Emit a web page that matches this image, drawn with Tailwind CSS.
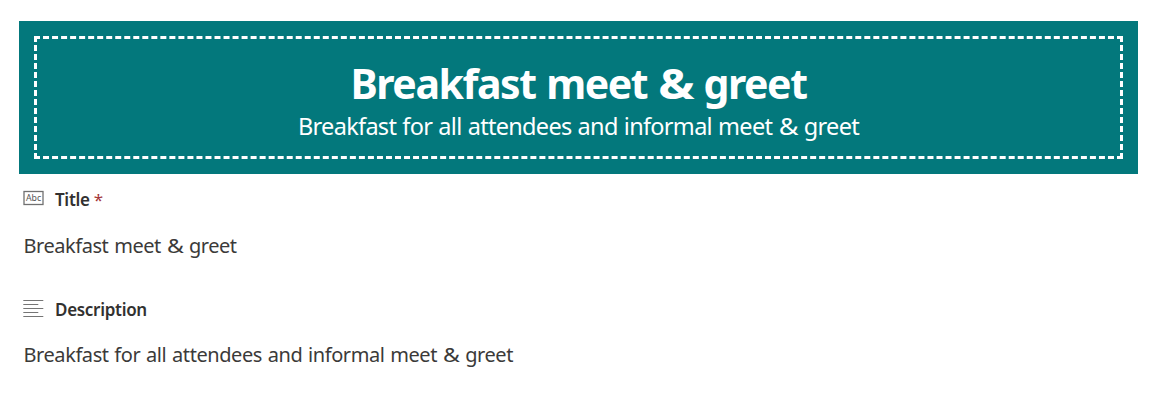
<!DOCTYPE html>
<html lang="en">
<head>
<meta charset="utf-8">
<title>Breakfast meet &amp; greet</title>
<script src="https://cdn.jsdelivr.net/npm/@tailwindcss/browser@4"></script>
</head>
<body class="bg-white font-['Noto_Sans','Open_Sans',sans-serif] text-[#3b3a39]">
<main class="h-[417px] overflow-hidden pl-[19px] pr-[22px] pt-[21px] whitespace-nowrap">
  <header class="h-[153px] bg-[#03787c] p-[15px] text-white">
    <div class="h-[123px] border-[3px] border-dashed border-white pt-[21px] text-center">
      <h1 class="h-[46px] text-[41px] leading-[46px] font-bold tracking-[-1.45px] [word-spacing:1.5px]">Breakfast meet <span class="mx-[0.07em] inline-block scale-x-[1.18]">&amp;</span> greet</h1>
      <p class="h-[40px] text-[23.5px] leading-[40px] tracking-[-0.7px] [word-spacing:0.7px]">Breakfast for all attendees and informal meet <span class="mx-[0.06em] inline-block scale-x-[1.15]">&amp;</span> greet</p>
    </div>
  </header>
  <section class="pl-[4px] pt-[10px]">
    <div class="flex h-[30px] items-center gap-[11px]">
      <svg class="h-[20px] w-[21px]" viewBox="0 0 21 20" fill="none"><rect x="1" y="2.5" width="19" height="13" stroke="#707070" stroke-width="1.3"/><text x="3" y="12" font-family="Noto Sans, sans-serif" font-size="8.4" textLength="15.2" lengthAdjust="spacingAndGlyphs" fill="#555">Abc</text></svg>
      <h2 class="pt-[2px] text-[17px] leading-[30px] font-semibold text-[#323130] tracking-[-0.3px]">Title <span class="font-normal text-[#a4373a]">*</span></h2>
    </div>
    <p class="mt-[16px] h-[32px] pl-[0.5px] text-[20px] leading-[32px] tracking-[-0.45px] [word-spacing:1px]">Breakfast meet <span class="mx-[0.06em] inline-block scale-x-[1.15]">&amp;</span> greet</p>
  </section>
  <section class="pl-[4px] pt-[32px]">
    <div class="flex h-[30px] items-center gap-[11px]">
      <svg class="h-[20px] w-[21px]" viewBox="0 0 21 20" fill="none" stroke="#757575"><path d="M.3 1.5h20M.3 5.5h15M.3 9.5h20M.3 13.5h15M.3 17.5h20"/></svg>
      <h2 class="pt-[2px] text-[17px] leading-[30px] font-semibold text-[#323130] tracking-[-0.3px]">Description</h2>
    </div>
    <p class="mt-[15px] h-[32px] pl-[0.5px] text-[20px] leading-[32px] tracking-[-0.43px] [word-spacing:1px]">Breakfast for all attendees and informal meet <span class="mx-[0.06em] inline-block scale-x-[1.15]">&amp;</span> greet</p>
  </section>
</main>
</body>
</html>
